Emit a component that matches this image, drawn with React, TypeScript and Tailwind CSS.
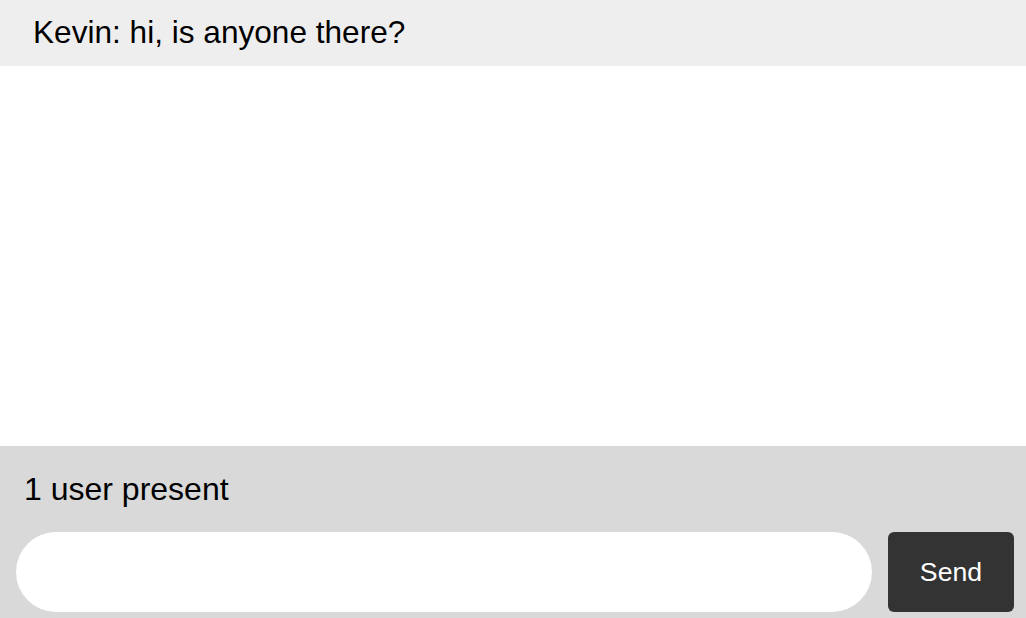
import { useState } from 'react';

const App: React.FC = () => {
  const [text, setText] = useState('');
  const messages = [{ user: 'Kevin', body: 'hi, is anyone there?' }];

  return (
    <div
      className="flex flex-col h-screen w-full bg-white text-black"
      style={{ fontFamily: '"Liberation Sans", Arial, sans-serif' }}
    >
      <ul className="flex-1 overflow-hidden">
        {messages.map((m, i) => (
          <li
            key={i}
            className="h-[66px] flex items-center px-[33px] text-[31.6px] bg-[#eeeeee]"
          >
            {m.user}: {m.body}
          </li>
        ))}
      </ul>
      <div className="h-[172px] bg-[#d9d9d9] flex flex-col">
        <div className="pl-6 pt-[25px] text-[32px] leading-[37px]">1 user present</div>
        <form
          className="flex gap-4 pl-4 pr-3 mt-auto pb-[6px]"
          onSubmit={(e) => {
            e.preventDefault();
            setText('');
          }}
        >
          <input
            value={text}
            onChange={(e) => setText(e.target.value)}
            className="flex-1 h-20 rounded-full bg-white px-8 text-[26px] outline-none border-0"
          />
          <button
            type="submit"
            className="w-[126px] h-20 rounded-md bg-[#333333] text-white text-[26.67px]"
          >
            Send
          </button>
        </form>
      </div>
    </div>
  );
};

export default App;
